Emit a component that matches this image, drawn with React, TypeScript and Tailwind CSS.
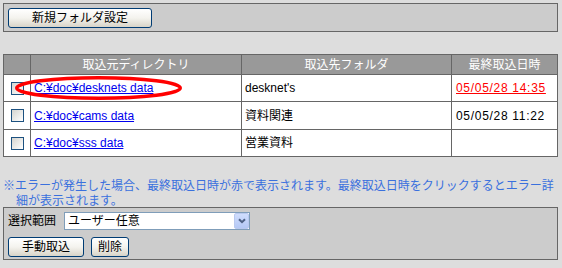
const rows = [
  { path: 'C:¥doc¥desknets data', folder: "desknet's", date: '05/05/28 14:35', error: true, h: 'h-[26px]' },
  { path: 'C:¥doc¥cams data', folder: '資料関連', date: '05/05/28 11:22', error: false, h: 'h-[27px]' },
  { path: 'C:¥doc¥sss data', folder: '営業資料', date: '', error: false, h: 'h-[26px]' },
];

function XpButton({ label, w }: { label: string; w: string }) {
  return (
    <button
      className={`${w} h-[20px] rounded-[3px] border border-[#003c74] bg-linear-to-b from-white via-[#f4f3ee] to-[#d8d4c8] text-[12px] leading-none text-black`}
    >
      {label}
    </button>
  );
}

function CheckBox() {
  return <div className="w-[13px] h-[13px] border border-[#1c5180] bg-linear-to-br from-[#d4d4cf] to-white" />;
}

export default function App() {
  return (
    <div className="w-[562px] h-[268px] overflow-hidden bg-[#dddddd] p-[3px] font-['Liberation_Sans','Noto_Sans_CJK_JP',sans-serif] text-[12px] text-black">
      {/* top bar */}
      <div className="w-[555px] h-[29px] border border-[#666666] bg-[#cccccc] pl-[4px] pt-[4px]">
        <XpButton label="新規フォルダ設定" w="w-[144px]" />
      </div>

      {/* folder table */}
      <div className="relative mt-[22px] w-[555px] grid grid-cols-[26px_210px_209px_105px] gap-px p-px bg-[#666666]">
        <div className="h-[19px] bg-[#999999]" />
        <div className="h-[19px] bg-[#999999] text-white flex items-center justify-center">取込元ディレクトリ</div>
        <div className="h-[19px] bg-[#999999] text-white flex items-center justify-center">取込先フォルダ</div>
        <div className="h-[19px] bg-[#999999] text-white flex items-center justify-center">最終取込日時</div>
        {rows.map((r) => (
          <div key={r.path} className="contents">
            <div className={`${r.h} bg-white flex items-center justify-center pl-px`}>
              <CheckBox />
            </div>
            <div className={`${r.h} bg-white flex items-center pl-[3px]`}>
              <a className="text-[#0000ee] underline">{r.path}</a>
            </div>
            <div className={`${r.h} bg-white flex items-center pl-[3px]`}>{r.folder}</div>
            <div className={`${r.h} bg-white flex items-center pl-[4px] tracking-[0.7px]`}>
              {r.error ? <a className="text-[#ff0000] underline">{r.date}</a> : r.date}
            </div>
          </div>
        ))}
        <svg
          className="absolute left-[10px] top-[20px] pointer-events-none"
          width="176"
          height="30"
          viewBox="0 0 176 30"
        >
          <ellipse cx="85.5" cy="14" rx="81.75" ry="10.25" fill="none" stroke="#ff0000" strokeWidth="3.5" />
        </svg>
      </div>

      {/* note */}
      <div className="mt-[22px] h-[28px] leading-[15px] text-[#3a70dd] whitespace-nowrap">
        <div>※エラーが発生した場合、最終取込日時が赤で表示されます。最終取込日時をクリックするとエラー詳</div>
        <div className="pl-[13px]">細が表示されます。</div>
      </div>

      {/* bottom controls */}
      <div className="w-[555px] h-[53px] border border-[#666666] bg-[#cccccc] px-[4px] pt-[4px]">
        <div className="flex items-center gap-[8px]">
          <span className="leading-[18px]">選択範囲</span>
          <div className="w-[186px] h-[18px] border border-[#7f9db9] bg-white flex items-center">
            <span className="flex-1 pl-[3px] leading-none">ユーザー任意</span>
            <div className="w-[15px] h-[16px] rounded-[2px] bg-linear-to-b from-[#d0ddfd] to-[#b4c8f6] border border-[#b9c9ef] flex items-center justify-center">
              <svg width="8" height="6" viewBox="0 0 8 6">
                <path d="M1 1.2 L4 4.2 L7 1.2" fill="none" stroke="#4d6185" strokeWidth="2" />
              </svg>
            </div>
          </div>
        </div>
        <div className="mt-[7px] flex gap-[7px]">
          <XpButton label="手動取込" w="w-[76px]" />
          <XpButton label="削除" w="w-[38px]" />
        </div>
      </div>
    </div>
  );
}
